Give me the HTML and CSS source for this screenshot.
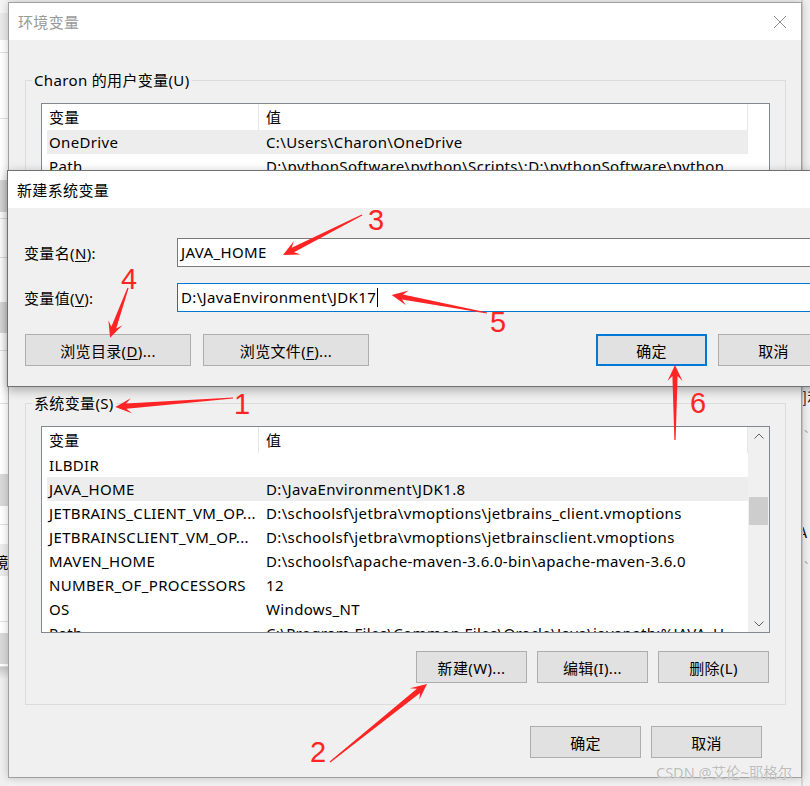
FILE: index.html
```html
<!DOCTYPE html>
<html lang="zh-CN">
<head>
<meta charset="utf-8">
<title>环境变量</title>
<link rel="stylesheet" href="styles.css">
</head>
<body>
<div class="desktop">

  <div class="bg-left">
    <div class="s s1"></div>
    <div class="s s2"></div>
    <div class="s s3 ln"></div>
    <div class="s s4 ln"></div>
    <div class="s s5"></div>
    <div class="s s6 dk"></div>
    <div class="s s7 ln"></div>
    <div class="s s8 ln"></div>
    <div class="s s9"></div>
    <div class="s s10 dk"></div>
    <div class="s s11 ln"></div>
    <div class="s s12 ln"></div>
    <div class="s s13"></div>
    <div class="s s14 dk"></div>
    <div class="s s15 ln"></div>
    <div class="s s16"></div>
    <div class="s s17">境</div>
    <div class="s s18 ln"></div>
    <div class="s s19"></div>
    <div class="s s20 dk"></div>
    <div class="s s21 ln"></div>
    <div class="s s22"></div>
  </div>

  <div class="bg-right">
    <span class="frag f1">]利</span>
    <span class="frag f2">、</span>
    <span class="frag f3">A</span>
    <span class="frag f4">、</span>
  </div>

  <section class="win env">
    <header class="titlebar">
      <span class="title inactive">环境变量</span>
      <svg class="close" viewBox="0 0 14 14" width="14" height="14"><path d="M1 1L13 13M13 1L1 13" stroke="#8c8c8c" stroke-width="1" fill="none"/></svg>
    </header>
    <div class="env-body">
      <fieldset class="group user">
        <legend>Charon 的用户变量(U)</legend>
        <div class="list user-list">
          <div class="list-main">
            <div class="lrow head"><span class="c1">变量</span><span class="c2">值</span></div>
            <div class="lrow sel"><span class="c1">OneDrive</span><span class="c2">C:\Users\Charon\OneDrive</span></div>
            <div class="lrow"><span class="c1">Path</span><span class="c2">D:\pythonSoftware\python\Scripts\;D:\pythonSoftware\python</span></div>
            <div class="lrow"><span class="c1">TEMP</span><span class="c2">%USERPROFILE%\AppData\Local\Temp</span></div>
            <div class="lrow"><span class="c1">TMP</span><span class="c2">%USERPROFILE%\AppData\Local\Temp</span></div>
          </div>
        </div>
        <div class="btnrow">
          <button class="btn">新建(N)...</button>
          <button class="btn">编辑(E)...</button>
          <button class="btn">删除(D)</button>
        </div>
      </fieldset>

      <fieldset class="group sys">
        <legend>系统变量(S)</legend>
        <div class="list sys-list">
          <div class="list-main">
            <div class="lrow head"><span class="c1">变量</span><span class="c2">值</span></div>
            <div class="lrow"><span class="c1">ILBDIR</span><span class="c2"></span></div>
            <div class="lrow sel"><span class="c1">JAVA_HOME</span><span class="c2">D:\JavaEnvironment\JDK1.8</span></div>
            <div class="lrow"><span class="c1">JETBRAINS_CLIENT_VM_OP...</span><span class="c2">D:\schoolsf\jetbra\vmoptions\jetbrains_client.vmoptions</span></div>
            <div class="lrow"><span class="c1">JETBRAINSCLIENT_VM_OP...</span><span class="c2">D:\schoolsf\jetbra\vmoptions\jetbrainsclient.vmoptions</span></div>
            <div class="lrow"><span class="c1">MAVEN_HOME</span><span class="c2">D:\schoolsf\apache-maven-3.6.0-bin\apache-maven-3.6.0</span></div>
            <div class="lrow"><span class="c1">NUMBER_OF_PROCESSORS</span><span class="c2">12</span></div>
            <div class="lrow"><span class="c1">OS</span><span class="c2">Windows_NT</span></div>
            <div class="lrow"><span class="c1">Path</span><span class="c2">C:\Program Files\Common Files\Oracle\Java\javapath;%JAVA_H</span></div>
          </div>
          <div class="scrollbar">
            <div class="sb-btn"><svg viewBox="0 0 10 6" width="10" height="6"><path d="M0.5 5.5L5 1L9.5 5.5" stroke="#606060" stroke-width="1" fill="none"/></svg></div>
            <div class="sb-track"><div class="sb-thumb"></div></div>
            <div class="sb-btn"><svg viewBox="0 0 10 6" width="10" height="6"><path d="M0.5 0.5L5 5L9.5 0.5" stroke="#606060" stroke-width="1" fill="none"/></svg></div>
          </div>
        </div>
        <div class="btnrow">
          <button class="btn">新建(W)...</button>
          <button class="btn">编辑(I)...</button>
          <button class="btn">删除(L)</button>
        </div>
      </fieldset>

      <div class="footer">
        <button class="btn">确定</button>
        <button class="btn">取消</button>
      </div>
    </div>
  </section>

  <section class="win newvar">
    <header class="titlebar">
      <span class="title">新建系统变量</span>
    </header>
    <div class="form">
      <label class="lbl">变量名(<u>N</u>):</label>
      <div class="input">JAVA_HOME</div>
      <label class="lbl">变量值(<u>V</u>):</label>
      <div class="input focus">D:\JavaEnvironment\JDK17<span class="caret"></span></div>
      <div class="form-btns">
        <div class="grp">
          <button class="btn wide">浏览目录(<u>D</u>)...</button>
          <button class="btn wide">浏览文件(<u>F</u>)...</button>
        </div>
        <div class="grp right">
          <button class="btn default">确定</button>
          <button class="btn">取消</button>
        </div>
      </div>
    </div>
  </section>

  <div class="watermark">CSDN @艾伦~耶格尔</div>

  <svg class="annot" viewBox="0 0 810 786" width="810" height="786">
    <g fill="#ff2424">
      <polygon transform="translate(362 215) rotate(153.15)" points="0,-0.6 77.5,-2.6 72.5,-7.5 88.5,0 72.5,7.5 77.5,2.6 0,0.6"/>
      <polygon transform="translate(128 288) rotate(109.8)" points="0,-0.6 42,-2.6 37,-7.5 53,0 37,7.5 42,2.6 0,0.6"/>
      <polygon transform="translate(487 313) rotate(-169.27)" points="0,-0.6 86,-2.6 81,-7.5 97,0 81,7.5 86,2.6 0,0.6"/>
      <polygon transform="translate(233 398) rotate(175.64)" points="0,-0.6 107,-2.6 102,-7.5 118,0 102,7.5 107,2.6 0,0.6"/>
      <polygon transform="translate(675 440) rotate(-90)" points="0,-0.6 64,-2.6 59,-7.5 75,0 59,7.5 64,2.6 0,0.6"/>
      <polygon transform="translate(330 762) rotate(-38.8)" points="0,-0.6 113.5,-2.6 108.5,-7.5 124.5,0 108.5,7.5 113.5,2.6 0,0.6"/>
    </g>
    <g class="num" fill="#ff2424">
      <text x="368" y="230">3</text>
      <text x="121" y="289">4</text>
      <text x="490" y="332">5</text>
      <text x="234" y="414">1</text>
      <text x="690" y="413">6</text>
      <text x="310" y="762">2</text>
    </g>
  </svg>
</div>
</body>
</html>
```

FILE: styles.css
```css
* { box-sizing: border-box; }
html, body { margin: 0; padding: 0; }
body {
  font-family: "Noto Sans", "Noto Sans CJK SC", sans-serif;
  font-size: 15px;
  color: #000;
  background: #f2f2f2;
}
.desktop {
  position: relative;
  width: 810px;
  height: 786px;
  overflow: hidden;
  background: #f2f2f2;
  letter-spacing: 0.35px;
}

/* background windows */
.bg-left {
  position: absolute;
  left: 0; top: 0;
  width: 9px; height: 786px;
  display: flex;
  flex-direction: column;
  background: #f0f0f0;
  overflow: hidden;
}
.bg-left .s { flex: none; background: #fff; }
.bg-left .ln { border-bottom: 1px solid #e0e0e0; }
.bg-left .dk { background: #d9d9d9; }
.s1 { height: 13px; background: #f5f5f5 !important; }
.s2 { height: 27px; background: #e9e9e9 !important; }
.s3 { height: 13px; }
.s4 { height: 66px; }
.s5 { height: 61px; }
.s6 { height: 32px; }
.s7 { height: 7px; }
.s8 { height: 39px; }
.s9 { height: 44px; }
.s10 { height: 31px; }
.s11 { height: 18px; }
.s12 { height: 53px; }
.s13 { height: 70px; }
.s14 { height: 32px; }
.s15 { height: 19px; }
.s16 { height: 19px; }
.s17 {
  height: 32px;
  background: #ececec !important;
  line-height: 36px;
  display: flex;
  justify-content: flex-end;
  font-family: "Noto Sans CJK SC", sans-serif;
  font-size: 15px;
  white-space: nowrap;
}
.s18 { height: 46px; }
.s19 { height: 11px; }
.s20 { height: 31px; }
.s21 { height: 3px; }
.s22 { height: 12px; background: linear-gradient(#c8c8c8, #f0f0f0) !important; }

.bg-right {
  position: absolute;
  left: 801px; top: 0;
  width: 9px; height: 786px;
  background: #f0f0f0;
  border-left: 2px solid #d6d6d6;
  display: flex;
  flex-direction: column;
  padding-left: 1px;
  overflow: hidden;
  font-family: "Noto Sans CJK SC", sans-serif;
  font-size: 15px;
  line-height: 20px;
}
.frag { white-space: nowrap; color: #111; }
.f1 { margin-top: 387px; margin-left: -2px; }
.f2 { margin-top: 10px; color: #999; font-size: 11px; }
.f3 { margin-top: 85px; margin-left: -6px; }
.f4 { margin-top: 6px; color: #999; font-size: 11px; }

/* windows */
.win {
  position: absolute;
  background: #f0f0f0;
}
.titlebar {
  height: 37px;
  background: #fff;
  display: flex;
  align-items: center;
  justify-content: space-between;
  padding: 0 14px 0 9px;
}
.title { font-size: 15px; }
.title.inactive { color: #999; }

.env {
  left: 8px; top: 2px;
  width: 794px; height: 776px;
  border: 1px solid #a0a0a0;
  box-shadow: 0 0 8px rgba(0,0,0,0.22);
}
.env-body {
  padding: 0 15px 0 16px;
}

.group {
  margin: 0;
  padding: 0;
  border: 1px solid #dcdcdc;
  min-width: 0;
}
.group legend {
  margin-left: 6px;
  padding: 0 2px;
  line-height: 20px;
  font-size: 15px;
}
.user { margin-top: 30px; height: 310px; }
.sys { margin-top: 13px; padding-bottom: 21px; }

.list {
  margin: 13px 15px 0 15px;
  border: 1px solid #828790;
  background: #fff;
  display: flex;
  overflow: hidden;
}
.user-list { height: 220px; }
.sys-list { height: 207px; }
.list-main {
  flex: 1;
  min-width: 0;
  padding-left: 5px;
  overflow: hidden;
}
.user-list .list-main { padding-right: 21px; }
.lrow {
  display: flex;
  height: 24px;
  line-height: 24px;
  white-space: nowrap;
}
.lrow.head {
  height: 26px;
  line-height: 26px;
  border-right: 1px solid #e8e8e8;
}
.lrow.sel { background: #ededed; }
.c1 {
  flex: none;
  width: 212px;
  padding-left: 2px;
  overflow: hidden;
}
.head .c1 { border-right: 1px solid #e5e5e5; }
.c2 {
  flex: 1;
  min-width: 0;
  padding-left: 7px;
  overflow: hidden;
}

.scrollbar {
  flex: none;
  width: 21px;
  background: #f0f0f0;
  display: flex;
  flex-direction: column;
}
.sb-btn {
  height: 17px;
  display: flex;
  align-items: center;
  justify-content: center;
}
.sb-track { flex: 1; padding: 53px 1px 0 1px; }
.sb-thumb { height: 28px; background: #cdcdcd; }

.btn {
  font-family: "Noto Sans", "Noto Sans CJK SC", sans-serif;
  font-size: 15px;
  letter-spacing: 0.35px;
  color: #000;
  height: 32px;
  width: 111px;
  padding: 0;
  background: #e1e1e1;
  border: 1px solid #adadad;
  border-radius: 0;
}
.btn u { text-decoration: underline; text-underline-offset: 2px; }

.btnrow {
  display: flex;
  justify-content: flex-end;
  gap: 10px;
  margin: 18px 16px 0 0;
}
.footer {
  display: flex;
  justify-content: flex-end;
  gap: 10px;
  margin: 21px 24px 0 0;
}

/* new variable dialog */
.newvar {
  left: 7px; top: 170px;
  width: 840px; height: 217px;
  border: 1px solid #707070;
  box-shadow: 0 3px 10px rgba(0,0,0,0.3);
}
.form {
  display: grid;
  grid-template-columns: 153px 1fr;
  row-gap: 16px;
  align-items: center;
  padding: 30px 17px 0 16px;
}
.lbl { font-size: 15px; }
.lbl u { text-underline-offset: 2px; }
.input {
  height: 29px;
  line-height: 27px;
  border: 1px solid #7a7a7a;
  background: #fff;
  padding-left: 3px;
  white-space: nowrap;
}
.input.focus { border-color: #0078d7; }
.caret {
  display: inline-block;
  width: 1px;
  height: 19px;
  background: #000;
  vertical-align: middle;
  margin-left: 1px;
  margin-top: -3px;
}
.form-btns {
  grid-column: 1 / span 2;
  display: flex;
  justify-content: space-between;
  margin-top: 6px;
  padding-left: 1px;
}
.grp { display: flex; gap: 12px; }
.grp.right { gap: 11px; }
.btn.wide { width: 166px; }
.btn.default { border: 2px solid #0078d7; }

.watermark {
  position: absolute;
  left: 656px; top: 761px;
  font-size: 14.5px;
  letter-spacing: 0;
  color: #bdbdbd;
  text-shadow: 0 0 1px #fff;
  white-space: nowrap;
  font-family: "Noto Sans", "Noto Sans CJK SC", sans-serif;
}

.annot {
  position: absolute;
  left: 0; top: 0;
  pointer-events: none;
}
.num text {
  font-family: "Liberation Sans", sans-serif;
  font-size: 29px;
  letter-spacing: 0;
}
```
